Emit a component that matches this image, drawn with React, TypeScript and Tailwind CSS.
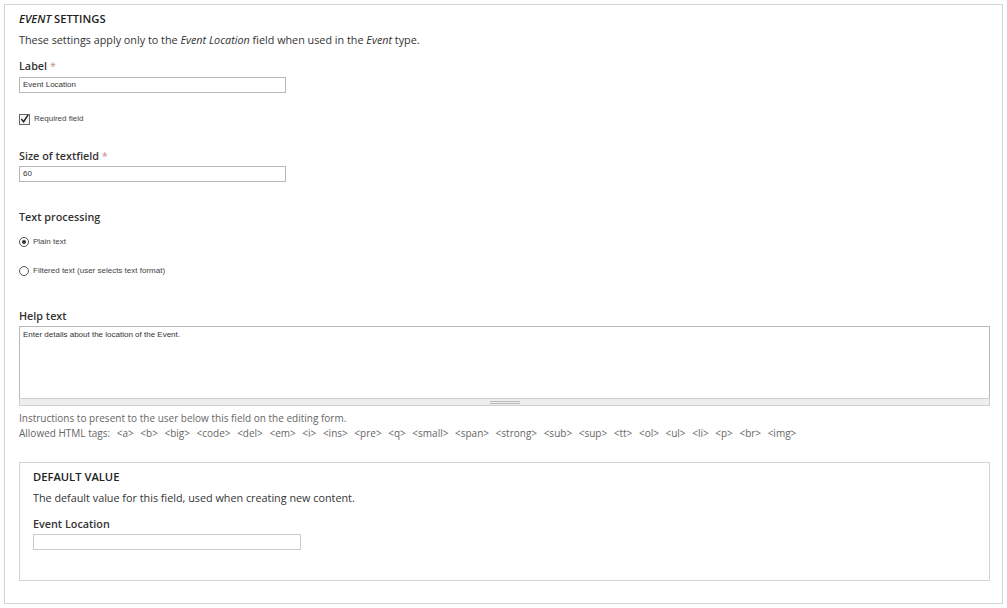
import React from 'react';

const font = { fontFamily: '"Open Sans", "Liberation Sans", sans-serif' };
const small = { fontFamily: '"Liberation Sans", Arial, sans-serif' };

function Req() {
  return <span className="text-[#d08a8a] font-normal"> *</span>;
}

function TextInput({ value, width, light }: { value: string; width: string; light?: boolean }) {
  return (
    <div
      className={`h-[16px] border bg-white px-[3px] text-[8px] leading-[14px] text-[#333] ${light ? 'border-[#cccccc]' : 'border-[#b8b8b8]'} ${width}`}
      style={small}
    >
      {value}
    </div>
  );
}

function Radio({ checked, label }: { checked?: boolean; label: string }) {
  return (
    <div className="flex items-center gap-[4px]">
      <span className="flex h-[10px] w-[10px] items-center justify-center rounded-full border border-[#555] bg-white">
        {checked && <span className="h-[4px] w-[4px] rounded-full bg-[#333]" />}
      </span>
      <span className="text-[8px] text-[#444]" style={small}>
        {label}
      </span>
    </div>
  );
}

export default function App() {
  const tags = ['a', 'b', 'big', 'code', 'del', 'em', 'i', 'ins', 'pre', 'q', 'small', 'span', 'strong', 'sub', 'sup', 'tt', 'ol', 'ul', 'li', 'p', 'br', 'img'];
  return (
    <div className="h-[608px] w-[1007px] bg-white p-[4px] text-[#333]" style={font}>
      <div className="h-[600px] w-[999px] border border-[#d4d4d4] px-[14px] pt-[7px]">
        <div className="text-[11.2px] font-semibold uppercase leading-[14px] text-[#222]">
          <i>Event</i> Settings
        </div>
        <p className="mt-[7px] text-[10.8px] leading-[14px]">
          These settings apply only to the <i>Event Location</i> field when used in the <i>Event</i> type.
        </p>

        <div className="mt-[12px] text-[10.8px] font-semibold leading-[14px]">
          Label<Req />
        </div>
        <div className="mt-[4px]">
          <TextInput value="Event Location" width="w-[267px]" />
        </div>

        <div className="mt-[20px] flex items-center gap-[4px]">
          <span className="flex h-[11px] w-[11px] items-center justify-center border border-[#666] bg-[#f4f4f4]">
            <svg viewBox="0 0 10 10" className="h-[10px] w-[10px]">
              <path d="M1.5 5 L4 8 L9 0.5" fill="none" stroke="#222" strokeWidth="1.6" />
            </svg>
          </span>
          <span className="text-[8px] text-[#444]" style={small}>
            Required field
          </span>
        </div>

        <div className="mt-[24px] text-[10.8px] font-semibold leading-[14px]">
          Size of textfield<Req />
        </div>
        <div className="mt-[3px]">
          <TextInput value="60" width="w-[267px]" />
        </div>

        <div className="mt-[28px] text-[10.8px] font-semibold leading-[14px]">Text processing</div>
        <div className="mt-[12px]">
          <Radio checked label="Plain text" />
        </div>
        <div className="mt-[17px]">
          <Radio label="Filtered text (user selects text format)" />
        </div>

        <div className="mt-[32px] text-[10.8px] font-semibold leading-[14px]">Help text</div>
        <div className="mt-[3px] w-[971px]">
          <div className="h-[72px] border border-b-0 border-[#b8b8b8] bg-white px-[3px] pt-[2px] text-[8px] text-[#333]" style={small}>
            Enter details about the location of the Event.
          </div>
          <div className="flex h-[8px] items-center justify-center border border-[#d0d0d0] bg-[#eeeeee]">
            <div className="h-[3px] w-[30px] border-y border-[#bbb]" />
          </div>
        </div>
        <div className="mt-[5px] text-[10px] leading-[15px] text-[#666]">
          <div>Instructions to present to the user below this field on the editing form.</div>
          <div>
            Allowed HTML tags:
            <span className="[word-spacing:4px]"> {tags.map((t) => `<${t}>`).join(' ')}</span>
          </div>
        </div>

        <div className="mt-[21px] h-[119px] w-[971px] border border-[#d4d4d4] px-[13px] pt-[7px]">
          <div className="text-[11.2px] font-semibold uppercase leading-[14px] text-[#222]">Default value</div>
          <p className="mt-[7px] text-[10.8px] leading-[14px]">The default value for this field, used when creating new content.</p>
          <div className="mt-[12px] text-[10.8px] font-semibold leading-[14px]">Event Location</div>
          <div className="mt-[3px]">
            <TextInput value="" width="w-[268px]" light />
          </div>
        </div>
      </div>
    </div>
  );
}
